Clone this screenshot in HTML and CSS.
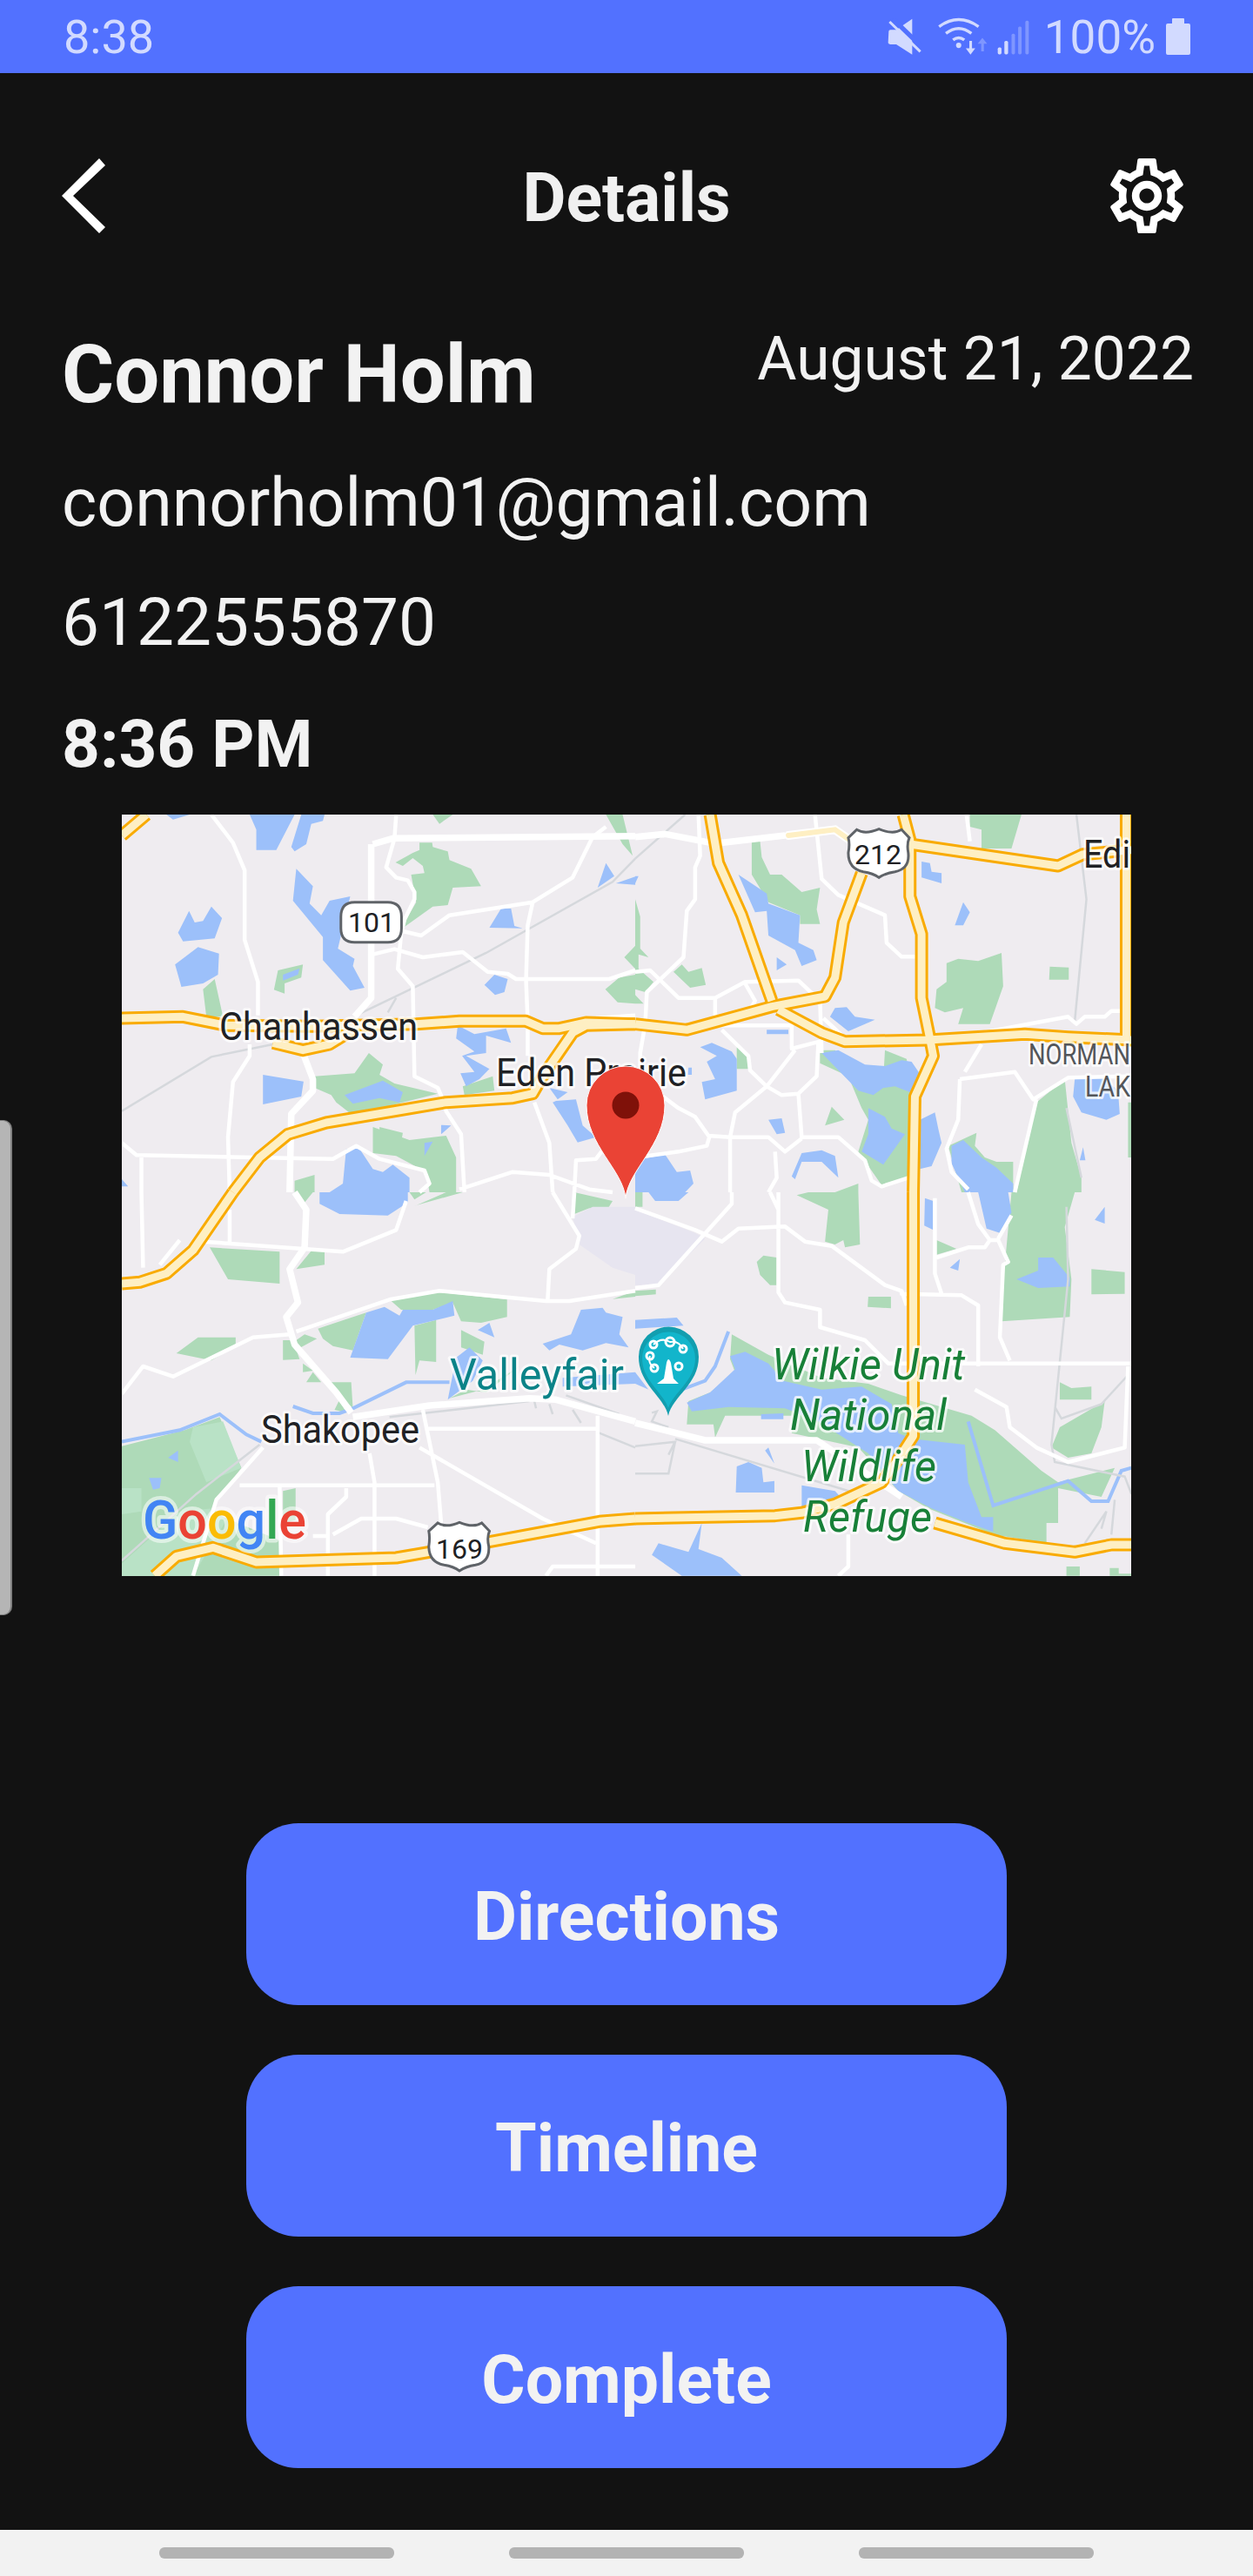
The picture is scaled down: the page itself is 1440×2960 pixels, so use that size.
FILE: index.html
```html
<!DOCTYPE html>
<html lang="en">
<head>
<meta charset="utf-8">
<title>Details</title>
<link rel="stylesheet" href="styles.css">
</head>
<body>
<div class="status">
  <span class="clock">8:38</span>
  <div class="status-right">
    <svg class="ic-mute" viewBox="120 60 120 126"><path class="lt" d="M124 105 Q124 100 130 100 L150 100 L205 62 V185 L150 150 L130 150 Q124 150 122 145Z"/><path class="gap" d="M138 62 L250 170"/><path class="slash" d="M127 72 L233 175"/></svg>
    <svg class="ic-wifi" viewBox="285 55 175 135"><path class="arc" d="M294 92 Q360 45 427 92M317 115 Q360 82 403 115M341 137 Q360 122 379 137"/><circle class="lt" cx="360" cy="155" r="9"/><path class="lt" d="M396 140 H405 V165 H416 L400 186 L384 165 H396Z"/><path class="dim" d="M436 175 H445 V150 H456 L440 130 L424 150 H436Z"/></svg>
    <svg class="ic-signal" viewBox="490 68 112 120"><rect class="lt" x="492" y="163" width="13" height="24" rx="5"/><rect class="lt" x="515" y="140" width="13" height="47" rx="5"/><rect class="dim" x="540" y="115" width="12" height="72" rx="5"/><rect class="dim" x="563" y="90" width="12" height="97" rx="5"/><rect class="dim" x="588" y="70" width="12" height="117" rx="5"/></svg>
    <span class="batt-text">100%</span>
    <svg class="ic-batt" viewBox="0 0 28 42"><path class="lt" d="M8 0 H20 Q21 0 21 1 V6 H26 Q28 6 28 8 V40 Q28 42 26 42 H2 Q0 42 0 40 V8 Q0 6 2 6 H7 V1 Q7 0 8 0Z"/></svg>
  </div>
</div>

<main class="main">
  <header class="header">
    <svg class="ic-back" viewBox="0 0 50 86"><polygon points="43,0 50,8 13,43 50,79 43,86 0,43"/></svg>
    <h1 class="title">Details</h1>
    <svg class="ic-gear" viewBox="2 2 20 20"><path d="M19.43 12.98c.04-.32.07-.64.07-.98s-.03-.66-.07-.98l2.11-1.65c.19-.15.24-.42.12-.64l-2-3.46c-.12-.22-.39-.3-.61-.22l-2.49 1c-.52-.4-1.08-.73-1.69-.98l-.38-2.65C14.46 2.18 14.25 2 14 2h-4c-.25 0-.46.18-.49.42l-.38 2.65c-.61.25-1.17.59-1.69.98l-2.49-1c-.23-.09-.49 0-.61.22l-2 3.46c-.13.22-.07.49.12.64l2.11 1.65c-.04.32-.07.65-.07.98s.03.66.07.98l-2.11 1.65c-.19.15-.24.42-.12.64l2 3.46c.12.22.39.3.61.22l2.49-1c.52.4 1.08.73 1.69.98l.38 2.65c.03.24.24.42.49.42h4c.25 0 .46-.18.49-.42l.38-2.65c.61-.25 1.17-.59 1.69-.98l2.49 1c.23.09.49 0 .61-.22l2-3.46c.12-.22.07-.49-.12-.64l-2.11-1.65zM17.45 11.27c.04.31.05.52.05.73 0 .21-.02.43-.05.73l-.14 1.13.89.7 1.08.84-.7 1.21-1.27-.51-1.04-.42-.9.68c-.43.32-.84.56-1.25.73l-1.06.43-.16 1.13-.2 1.35h-1.4l-.19-1.35-.16-1.13-1.06-.43c-.43-.18-.83-.41-1.23-.71l-.91-.7-1.06.43-1.27.51-.7-1.21 1.08-.84.89-.7-.14-1.13c-.03-.31-.05-.54-.05-.74s.02-.43.05-.73l.14-1.13-.89-.7-1.08-.84.7-1.21 1.27.51 1.04.42.9-.68c.43-.32.84-.56 1.25-.73l1.06-.43.16-1.13.2-1.35h1.39l.19 1.35.16 1.13 1.06.43c.43.18.83.41 1.23.71l.91.7 1.06-.43 1.27-.51.7 1.21-1.07.85-.89.7.14 1.13zM12 8c-2.21 0-4 1.79-4 4s1.79 4 4 4 4-1.79 4-4-1.79-4-4-4zm0 6c-1.1 0-2-.9-2-2s.9-2 2-2 2 .9 2 2-.9 2-2 2z"/></svg>
  </header>

  <section class="info">
    <div class="name-row">
      <div class="name">Connor Holm</div>
      <div class="date">August 21, 2022</div>
    </div>
    <div class="line email">connorholm01@gmail.com</div>
    <div class="line phone">6122555870</div>
    <div class="line time">8:36 PM</div>
  </section>

  <svg class="map" viewBox="0 0 1160 875">
    <defs>
      <g id="hw">
        <g class="nw"><path d="M26 750 L210 745 L340 775 L600 778 L910 770 L1040 760 L1240 760 L1290 785 L1340 785 L1420 765 L1568 770"/><path d="M480 835 L570 860 L650 840 L720 790"/><path d="M360 1350 L440 1230 L525 1150 L640 1110 L1000 1040 L1200 1025 L1260 1010 L1290 950 L1380 800 L1420 775 L1568 770"/><path d="M26 120 L100 48"/></g>
        <g class="ne"><path d="M225 48 L250 215 L320 395 L410 690"/><path d="M805 48 L825 135 L825 330 L860 460 L860 680 L885 820 L895 880 L840 1020 L835 1350"/><path d="M825 150 L1270 225 L1345 185 L1490 170"/><path d="M1475 48 L1475 820"/><path d="M0 770 L155 790 L410 710 L570 675 L600 610 L625 420 L680 250"/><path d="M430 720 L560 800 L630 830 L880 825 L1170 805 L1300 815 L1490 825"/></g>
        <g class="sw"><path d="M360 0 L240 200 L160 280 L80 310 L26 315"/><path d="M125 1322 L190 1255 L300 1225 L430 1275 L850 1260 L950 1240 L1130 1205 L1460 1135 L1568 1125"/></g>
        <g class="se"><path d="M835 0 L835 840 L790 920 L740 1000 L600 1075 L500 1105 L420 1115 L0 1125"/><path d="M900 1140 L1110 1210 L1320 1240 L1430 1215 L1490 1215"/></g>
      </g>
    </defs>

    <rect class="land" width="1160" height="875"/>

    <g class="park">
      <path class="nw" d="M960 48H1020L980 80ZM920 145H958L960 160L1005 175L1010 205L1075 235L1105 295L1020 300L1005 360L960 365L875 435L880 410L910 350L895 255L935 250L930 225L900 198L870 225L848 213L900 180L920 170ZM1480 48H1530L1560 190L1530 150ZM1535 540L1568 500V580ZM1478 650L1520 610L1568 600V700L1515 695ZM495 585L570 565L565 610L515 630L515 665L483 652ZM270 650L305 615L330 745L280 745ZM605 950L725 940L768 870L810 910L800 945L845 975L975 1010L870 1040L720 1085L670 1040L655 1015L605 990ZM800 1125L870 1145L860 1210L800 1175ZM890 1170L1000 1155L1030 1230V1350H950L940 1280L850 1225L780 1215V1125ZM1050 985L1140 950L1145 1000L1055 1015ZM545 1310L605 1290V1350H545Z"/>
      <path class="ne" d="M1040 48H1160L1130 165H1040V100L1005 90V48ZM350 140H375L380 195L405 255H440L500 315L555 300L545 375L555 425H495V395L400 350L350 255ZM935 560L970 545L1030 553L1100 525L1105 640L1065 770H970L985 715L930 730L900 715L905 650L935 625ZM1245 572L1302 575V617L1243 617ZM115 590L140 565L160 590L200 577L212 635L165 645ZM0 340L15 400V510L40 540L10 530V580L55 625L30 660L0 650ZM0 670L25 700H0ZM305 850L340 880V925H305ZM555 905V860H600L660 940L745 960L750 860L815 890L830 1000L825 1150L860 1240L820 1300L740 1325L670 1210L700 1100L680 1060L640 950ZM570 1120L590 1055L628 1100ZM1145 1350L1205 1040L1290 960L1310 1180L1340 1300V1350ZM940 1190L1025 1145L1020 1190L1050 1230L1085 1245H1135V1350H980ZM600 1350L670 1320V1350ZM1480 1040H1490V1230H1480ZM0 1320L20 1350H0Z"/>
      <path class="sw" d="M290 190L500 205V315L345 300ZM550 265L600 195H635V250ZM190 555L255 500H368V530L295 580ZM510 510H540L560 575L510 578ZM550 510L575 490L612 505L555 540ZM570 590L600 615L570 620ZM580 655L600 620L625 655ZM650 655H715L720 745L680 700ZM665 750L680 715L700 760ZM615 470L760 415L720 545L660 530L630 505ZM830 370L980 345L1183 370V430L1105 450L1045 445L1020 380L960 405H865ZM905 460L970 440V585L920 580L908 630ZM1045 475L1115 515L1110 560L1045 535ZM26 875L215 820L320 775L385 950L290 1100L500 1200V1322H26ZM510 1030L548 1020V1130L510 1140ZM545 0H600L575 35ZM890 0H940L905 25ZM910 45L1050 0H1000L900 50ZM1385 0L1500 30L1470 85L1430 55L1385 75ZM1500 368L1568 340V360ZM1010 710L1060 680L1120 690L1220 600L1110 680Z"/>
      <path class="se" d="M485 10L520 0H670L675 180L630 190L625 165L600 180L570 170L580 60ZM365 240L385 218L425 225V320H405L375 285ZM700 360H768V400L698 395ZM0 340L62 335V352L0 358ZM905 165L965 195L905 215ZM1110 250L1130 0H1320L1290 120L1310 300L1305 430L1100 445L1105 250ZM1370 265L1470 275V350L1370 352ZM1275 655L1310 675L1370 670V715H1275ZM160 720L225 690L300 620L285 575L290 490L400 560L560 640L700 660L800 700L1010 770L1080 820L1220 960L1270 1000L1440 950L1400 1050L1270 1020V1140H1235V1210L1075 1180L880 1090L790 1030L670 880L470 830V770H270L240 845L235 800H155ZM1250 880L1275 810L1410 720L1400 810L1370 900L1300 915ZM1295 1290H1335V1322H1295ZM1425 1295H1452V1315H1490V1322H1425ZM0 0H22V50H0Z"/>
    </g>
    <g class="park-lt"><path class="sw" d="M26 1020H85V1100L26 1110ZM240 810L330 790L385 950L280 1000L230 860ZM26 1322V1280L200 1100L300 1090L340 1130L240 1322Z"/></g>
    <path class="camp sw" d="M1380 85L1440 50H1568V285L1500 260L1400 180Z"/>
    <path class="camp se" d="M0 60L180 140L210 160L70 320H0Z"/>

    <g class="water">
      <path class="nw" d="M160 48H230L180 65ZM410 48H545L490 170H430V100ZM565 48H635L630 70L595 80L580 150L545 175L535 160ZM550 235L600 295L590 355L625 395L650 345L712 330L675 510L725 545L720 570L755 645L712 655L630 550V470L540 345ZM228 380L245 420L270 415L295 365L327 405L305 475L210 485L195 455ZM255 505L318 527L315 600L270 630L205 642L186 565ZM510 600L560 578L555 600L510 620ZM1165 372H1195L1205 432L1230 440L1130 438ZM1145 600L1185 615L1175 660L1147 670L1115 635ZM1480 215L1505 260L1455 300ZM1510 285L1568 262V290ZM1035 775L1085 805L1180 785L1195 835L1120 810V870L1060 880L1130 925L1100 960L1060 985L1043 940L1085 935L1048 880L1085 865L1030 820ZM695 1015L810 965L870 1005L860 1040L800 1025L720 1045ZM450 945L572 968L565 1020L450 1047ZM1330 1035L1390 1030L1410 1120L1450 1160L1395 1178L1365 1120L1320 1040ZM1310 990L1365 1005L1335 1030ZM985 1118L1015 1120L985 1150ZM935 1180L960 1175L935 1225ZM700 1200H740L780 1270L810 1280L840 1255L890 1300V1350H650L690 1320ZM26 1305L45 1330H26Z"/>
      <path class="ne" d="M310 255L395 320L400 355L495 395L490 490L535 515L545 550L500 570L480 515L400 465L395 380L360 385ZM425 540L455 565L425 585ZM585 745L600 715L635 712L660 745L720 755L640 795ZM860 210L885 215L890 245L920 250V285L860 265ZM985 350L1005 385L985 430H960ZM395 790H460V805H395ZM195 850L230 835L290 865L305 890V1000L210 1030L200 970L240 960L215 900L245 880ZM160 920H170V945H158ZM560 870L610 860L690 910L750 915L800 895L830 900L860 950L825 1005L780 985L745 990L715 1015L670 1000ZM700 1060L750 1090L770 1130L810 1150L745 1255L680 1210L700 1150ZM855 1100L900 1075L910 1130L920 1180L890 1260L855 1270ZM950 1190L985 1170L1040 1230L1085 1265L1135 1320V1350H990L950 1250ZM400 1100L440 1095L450 1145L425 1150ZM1320 960L1400 950L1450 1000L1455 1080L1415 1100L1340 1075L1315 1020ZM1335 1240L1345 1195L1352 1240ZM500 1215L560 1205L600 1225L610 1300L560 1245H500L480 1305L470 1295ZM0 1240L90 1220L125 1280L165 1275L175 1320L150 1350H0ZM0 260H10L0 285Z"/>
      <path class="sw" d="M620 0H885V35L825 80L680 75L620 40ZM760 415L815 395L860 425L870 405H960L1020 375L1025 425L900 460L825 575L712 570ZM1095 475L1130 450L1145 500ZM1290 522L1375 490L1405 405L1470 398L1480 415L1530 430L1520 490L1548 535L1480 520L1410 545L1340 525L1310 545ZM1030 570L1070 535L1110 580L1080 650L1005 715ZM165 915L195 890V930ZM108 985H145L140 1020L120 1025ZM1350 640L1568 620V660L1350 670Z"/>
      <path class="se" d="M155 725L225 690L300 610L285 565L330 550L400 590L445 650L560 680L680 670L770 730L790 830L830 850L990 870L1000 1000L1040 1120H1075V1170L1000 1140L890 1090L790 1030L700 900L550 790L450 745L280 740L170 755ZM0 440L125 432L145 460L0 470ZM0 620L40 680L60 690L0 660ZM1145 300L1210 270V225H1255L1305 295V325L1210 330ZM1380 95L1410 50V108ZM870 20L895 30V130L868 115ZM945 260L975 230L970 270ZM1030 0H1120L1130 70L1095 140L1055 125ZM305 945L340 930L380 950L385 1000L418 995V1035H302ZM390 890L400 880L418 935ZM378 765L445 762V782H378ZM500 1010L600 1030L640 1080L500 1100ZM50 1250L70 1210L160 1240L200 1140L190 1230L260 1260L320 1322H140ZM40 0H160L130 30L60 30Z"/>
    </g>
    <g class="river">
      <path class="sw" d="M26 860L200 820L320 765L400 835L445 860M540 738L600 762L680 762L720 745L880 655L1010 655"/>
      <path class="se" d="M280 480L240 600L210 650L140 680M1000 790L1075 1080L1300 995L1370 1065L1420 1065L1460 960L1490 950"/>
    </g>

    <g class="rail">
      <path class="nw" d="M26 1070L295 883L480 840M740 735L1120 525L1500 280L1568 200M825 730L850 680"/>
      <path class="ne" d="M0 200L150 48M1325 48L1355 340L1320 760M1295 1060L1340 1300"/>
      <path class="sw" d="M26 1270L250 1040L440 870M830 775L1250 720M1360 700L1520 765M1265 720L1270 745M1310 730L1320 765M1380 750L1405 795M1460 830L1568 880"/>
      <path class="se" d="M0 875L120 860L100 905M0 970H100L120 860M120 850L700 1050M1295 50L1300 300L1250 870L1260 930L1470 980L1490 1040M1260 740L1280 780L1400 730L1480 630M1400 1160L1415 1100L1350 1210M1440 1060L1430 1180M50 760L65 755L50 790L100 810"/>
    </g>

    <g class="road">
      <path class="nw" d="M295 48L360 145L395 240V480L435 625V740M410 840V880L360 970L345 1160L350 1350M850 48L845 130L820 230L850 265L885 275L905 315V340L875 410L865 460L855 580L900 640L905 950L975 990L990 1030L1000 1070L1045 1150L1055 1350M1480 90L1440 125L1380 265L1260 350L1010 395L925 465L870 450M780 530L845 512L930 540L1050 522L1125 590L1185 597L1210 615H1490L1568 585M1260 350L1245 430L1240 620L1245 760V880M26 1180L70 1222L660 1235L730 1190L800 1235L935 1275L950 1320L920 1350M85 1230V1350M1040 1340L1200 1280L1310 1290L1430 1340L1500 1350M1265 1040L1310 1180L1320 1350M1385 1350L1390 1240L1450 1235L1480 1190M1450 750L1568 740"/>
      <path class="ne" d="M190 48L195 190L180 230V340L155 380L145 540L35 660L30 770L15 870V1000M540 48L560 270L610 325L750 395L755 490L800 538H840M995 48L1005 140M0 590L45 585L130 680H240L330 625L490 620L555 690L560 870M240 680V770M330 630L360 690L350 710M180 775H470V855L555 830M260 790L340 880L345 930L395 985L440 1015L490 1010L545 950L550 830M480 860L395 985L300 1075L285 1160V1350M490 1010L500 1160H610L690 1240L710 1310L740 1330L820 1300M60 1000L130 1060L180 1090L220 1155L285 1160H400L450 1210L500 1165M0 1230L130 1210L215 1190L225 1150M420 1210L425 1300L400 1350M975 960L1140 935L1195 1030L1300 955L1490 950M975 960L970 1100L935 1200L950 1280L1000 1340M1040 840L990 935M1205 1030L1140 1350M1040 800L1300 745L1325 770L1350 745H1410L1430 725H1470M565 750L640 830"/>
      <path class="sw" d="M85 0L90 260M350 60V180M880 30L850 130L690 205L270 170M26 695L90 600L180 635L420 500L530 490M550 480L830 370L980 340L1300 375H1370L1568 340M1320 0L1400 150L1390 195L1310 265L1305 370M1385 0L1380 90M200 165L140 250M945 815H1450M930 750L975 1000L985 1140M450 880L310 1060L240 1322M380 1010H965M770 900L785 1000V1322M920 880L1290 1125L1450 1210M500 1010L505 1322M700 1020V1050L645 1110V1322M660 1180L745 1125H850L945 1155M600 1185H645M1455 770V1322M1300 1322L1320 1290H1568"/>
      <path class="se" d="M0 55L180 130L260 170L310 125L450 118L510 170L590 185L750 320L800 340V350L980 355L1030 390V600M290 0V40L70 320L0 330M430 0V345L450 380L555 405V465L690 510L760 590H1490M405 0L430 60M900 20V280L920 350M905 225L1000 190H1050L1065 165H1090L1120 240L1105 250L1095 500L1125 580M1000 0L1030 110L1065 165M1130 80L1090 160M1020 680L1115 740L1125 810L1205 880L1300 930L1470 880L1480 600M640 1180V1290L610 1322M800 340L815 390"/>
    </g>
    <g class="road-w">
      <path class="nw" d="M780 150L840 130L1568 122M775 150V680L725 745M570 870L600 960V1000L535 1080L530 1350"/>
      <path class="ne" d="M0 125L90 115L240 148L450 120"/>
      <path class="sw" d="M545 0L580 60L575 190L530 265L555 380L520 430L545 525L670 690L715 760M720 775L950 735L1250 710L1330 715L1568 790"/>
      <path class="se" d="M0 795L210 855H545L800 1050"/>
    </g>

    <use href="#hw" class="hw-o"/>
    <use href="#hw" class="hw-i"/>
    <path class="ne hw-cap-o" d="M460 120L600 100L650 140"/>
    <path class="ne hw-cap-i" d="M460 120L600 100L650 140"/>

    <g class="lbl">
      <text class="t-dark" x="112" y="259" textLength="228" lengthAdjust="spacingAndGlyphs">Chanhassen</text>
      <text class="t-dark" x="430" y="312" textLength="219" lengthAdjust="spacingAndGlyphs">Eden Prairie</text>
      <text class="t-dark" x="1105" y="61" textLength="54" lengthAdjust="spacingAndGlyphs">Edi</text>
      <text class="t-gray" x="1042" y="287" textLength="117" lengthAdjust="spacingAndGlyphs">NORMAN</text>
      <text class="t-gray" x="1107" y="324" textLength="52" lengthAdjust="spacingAndGlyphs">LAK</text>
      <text class="t-dark" x="160" y="722" textLength="182" lengthAdjust="spacingAndGlyphs">Shakopee</text>
      <text class="t-teal" x="377" y="661" textLength="200" lengthAdjust="spacingAndGlyphs">Valleyfair</text>
      <text class="t-green" x="747" y="649" textLength="222" lengthAdjust="spacingAndGlyphs">Wilkie Unit</text>
      <text class="t-green" x="768" y="707" textLength="180" lengthAdjust="spacingAndGlyphs">National</text>
      <text class="t-green" x="781" y="766" textLength="155" lengthAdjust="spacingAndGlyphs">Wildlife</text>
      <text class="t-green" x="783" y="824" textLength="148" lengthAdjust="spacingAndGlyphs">Refuge</text>
    </g>

    <path class="shield nw" d="M725 350H825Q866 350 866 400V440Q866 488 825 488H725Q684 488 684 440V400Q684 350 725 350Z"/>
    <path class="shield ne" d="M665 100Q690 118 732 98Q775 118 800 100L823 128Q815 150 820 180Q825 235 780 245Q750 250 732 265Q715 250 685 245Q640 235 640 180Q645 150 640 128Z"/>
    <path class="shield sw" d="M975 1140Q1000 1158 1040 1138Q1082 1158 1107 1140L1130 1168Q1122 1190 1128 1220Q1132 1275 1088 1285Q1060 1290 1040 1305Q1022 1290 994 1285Q948 1275 948 1220Q952 1190 948 1168Z"/>
    <text class="t-shield" x="287" y="135">101</text>
    <text class="t-shield" x="869" y="57">212</text>
    <text class="t-shield" x="388" y="855">169</text>

    <path class="pin-teal-d" d="M628 691C623 668 594 655 594 623A34.500 34.500 0 0 1 663 623C663 655 633 668 628 691Z"/>
    <path class="pin-teal" d="M628 682C622 664 598 650 598 625A30.500 30.500 0 0 1 659 625C659 650 634 664 628 682Z"/>
    <g class="wheel">
      <circle cx="607" cy="622" r="4"/><circle cx="611" cy="609" r="4"/><circle cx="630" cy="606" r="5"/><circle cx="645" cy="614" r="4"/><circle cx="640" cy="634" r="4"/><circle cx="612" cy="636" r="4"/>
      <path d="M611 609Q620 600 630 606Q640 604 645 614M607 622Q604 630 612 636"/>
    </g>
    <path class="wheel-b" d="M623 648L626 630Q628 622 631 630L634 648L640 654H615Z"/>

    <text class="t-google" x="24" y="832" textLength="188" lengthAdjust="spacingAndGlyphs"><tspan class="g-b">G</tspan><tspan class="g-r">o</tspan><tspan class="g-y">o</tspan><tspan class="g-b">g</tspan><tspan class="g-g">l</tspan><tspan class="g-r">e</tspan></text>

    <path class="pin" d="M579 441C576 408 534 380 534 334A45 45 0 0 1 624 334C624 380 582 408 579 441Z"/>
    <circle class="pin-dot" cx="579" cy="334" r="15.500"/>
  </svg>

  <nav class="actions">
    <button class="btn">Directions</button>
    <button class="btn">Timeline</button>
    <button class="btn">Complete</button>
  </nav>
</main>

<footer class="navbar">
  <span class="pill"></span>
  <span class="pill"></span>
  <span class="pill"></span>
</footer>

<div class="edge-handle"></div>
</body>
</html>
```
FILE: styles.css
```css
* { box-sizing: border-box; }
html, body { margin: 0; padding: 0; }
body {
  width: 1440px;
  height: 2960px;
  background: #121212;
  font-family: Roboto, "Liberation Sans", sans-serif;
  display: flex;
  flex-direction: column;
  position: relative;
  overflow: hidden;
  color: #f2f2f2;
}

/* status bar */
.status {
  height: 84px;
  background: #5271ff;
  color: #d2daff;
  display: flex;
  align-items: center;
  justify-content: space-between;
  padding: 0 72px 0 73px;
  flex: none;
}
.clock { font-size: 54px; line-height: 84px; padding-top: 2px; }
.status-right { display: flex; align-items: center; height: 84px; }
.batt-text { font-size: 53px; line-height: 84px; margin: 0 12px 0 17px; padding-top: 2px; }
.lt { fill: #d2daff; }
.dim { fill: #7f96ff; }
.gap { stroke: #5271ff; stroke-width: 16; fill: none; }
.slash { stroke: #d2daff; stroke-width: 9; fill: none; }
.arc { stroke: #d2daff; stroke-width: 10; fill: none; }
.ic-mute { width: 40px; height: 42px; margin-right: 16px; }
.ic-wifi { width: 60px; height: 46px; margin-top: -2px; margin-right: 10px; }
.ic-signal { width: 37px; height: 40px; margin-top: 2px; }
.ic-batt { width: 28px; height: 42px; margin-top: -1px; }

/* header */
.main { flex: 1; display: flex; flex-direction: column; }
.header {
  margin-top: 96px;
  height: 88px;
  padding: 0 79px;
  display: grid;
  grid-template-columns: 1fr auto 1fr;
  align-items: center;
}
.ic-back { width: 50px; height: 86px; fill: #fff; margin-left: -8px; margin-top: -2px; }
.ic-gear { width: 86px; height: 88px; fill: #fff; justify-self: end; margin-top: -2px; }
.title {
  margin: 4px 0 0;
  font-size: 77px;
  font-weight: 700;
  line-height: 88px;
  color: #f0f0f0;
}

/* info */
.info { margin-top: 107px; padding: 0 68px 0 71px; }
.name-row { display: flex; justify-content: space-between; align-items: flex-start; }
.name { font-size: 92px; font-weight: 700; line-height: 100px; margin-top: 6px; }
.date { font-size: 69.500px; line-height: 80px; margin-top: -2px; }
.line { font-size: 77px; line-height: 90px; }
.email { margin-top: 52px; }
.phone { margin-top: 47px; font-size: 76.500px; }
.time { margin-top: 50px; font-weight: 700; font-size: 76.500px; }

/* map */
.map {
  display: block;
  flex: none;
  width: 1160px;
  height: 875px;
  margin: 36px auto 0;
  overflow: hidden;
}
.map path { vector-effect: non-scaling-stroke; }
.nw { transform: translate(-10px, -16px) scale(.3827, .33333); }
.ne { transform: translate(590px, -16px) scale(.3827, .33333); }
.sw { transform: translate(-10px, 434px) scale(.3827, .33333); }
.se { transform: translate(590px, 434px) scale(.3827, .33333); }
.land { fill: #efecf0; }
.park { fill: #aedab8; }
.park-lt { fill: #b9e2c6; }
.camp { fill: #e7e5f0; }
.water { fill: #9cc0fa; }
.river { fill: none; stroke: #9cc0fa; stroke-width: 4; }
.rail { fill: none; stroke: #d5d8dc; stroke-width: 2.500; }
.road { fill: none; stroke: #fff; stroke-width: 4.500; stroke-linejoin: round; }
.road-w { fill: none; stroke: #fff; stroke-width: 7.500; stroke-linejoin: round; }
.hw-o { fill: none; stroke: #f9ab00; stroke-width: 15; stroke-linejoin: round; }
.hw-i { fill: none; stroke: #feefc3; stroke-width: 9; stroke-linejoin: round; }
.hw-cap-o { fill: none; stroke: #fff; stroke-width: 10; stroke-linecap: round; }
.hw-cap-i { fill: none; stroke: #feefc3; stroke-width: 6; stroke-linecap: round; }
.map text { font-family: Roboto, "Liberation Sans", sans-serif; }
.lbl text {
  paint-order: stroke;
  stroke: rgba(255, 255, 255, .75);
  stroke-width: 6px;
  stroke-linejoin: round;
}
.t-dark { font-size: 45px; fill: #202124; }
.t-gray { font-size: 33px; fill: #53565a; }
.t-teal { font-size: 50px; fill: #0b8388; }
.t-green { font-size: 50px; font-style: italic; fill: #188038; }
.shield { fill: #fff; stroke: #5f6368; stroke-width: 3; }
.t-shield { font-size: 32px; fill: #202124; text-anchor: middle; }
.pin { fill: #ea4335; stroke: #fff; stroke-width: 1; }
.pin-dot { fill: #7f1109; }
.pin-teal-d { fill: #129eaf; }
.pin-teal { fill: #12b5cb; }
.wheel { fill: none; stroke: #fff; stroke-width: 3; }
.wheel path { stroke-width: 2; }
.wheel-b { fill: #fff; }
.t-google {
  font-size: 62px;
  font-weight: 500;
  paint-order: stroke;
  stroke: rgba(255, 255, 255, .55);
  stroke-width: 9px;
  stroke-linejoin: round;
}
.g-b { fill: #4285f4; }
.g-r { fill: #ea4335; }
.g-y { fill: #fbbc05; }
.g-g { fill: #34a853; }

/* buttons */
.actions {
  margin-top: 284px;
  display: flex;
  flex-direction: column;
  align-items: center;
  gap: 57px;
}
.btn {
  width: 874px;
  height: 209px;
  border: 0;
  border-radius: 60px;
  background: #5271ff;
  color: #f2f2f2;
  font-family: inherit;
  font-size: 77px;
  font-weight: 700;
  padding: 6px 0 0;
}

/* nav bar */
.navbar {
  flex: none;
  height: 53px;
  background: #f2f2f2;
  display: flex;
  justify-content: center;
  gap: 132px;
  padding-top: 20px;
}
.pill { width: 270px; height: 13px; border-radius: 6px; background: #b3b3b3; }

/* samsung edge handle */
.edge-handle {
  position: absolute;
  left: 0;
  top: 1287px;
  width: 14px;
  height: 569px;
  background: #b5b5b5;
  border: solid #808080;
  border-width: 1px 2px 1px 0;
  border-radius: 0 10px 10px 0;
}
```
